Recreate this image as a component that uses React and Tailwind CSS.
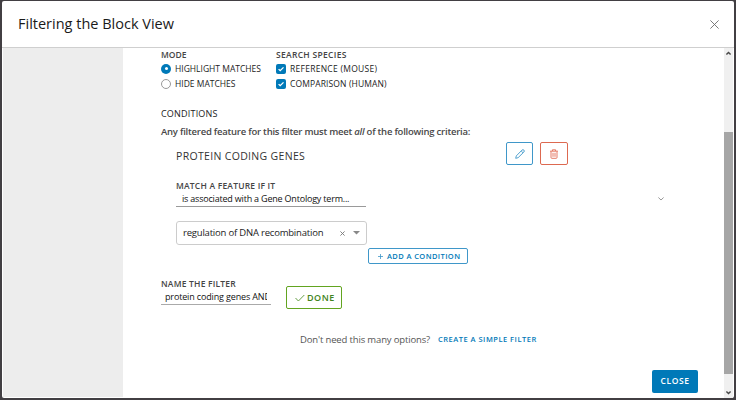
import React from "react";

function Radio({ checked, children, className }) {
  return (
    <label className="flex h-[15px] items-center gap-1">
      <span
        className={
          checked
            ? "flex size-[10px] items-center justify-center rounded-full bg-[#0079b8]"
            : "size-[10px] rounded-full border border-[#9a9a9a] bg-white"
        }
      >
        {checked && <span className="size-[3px] rounded-full bg-white" />}
      </span>
      <span className={`whitespace-nowrap text-[8.5px] font-medium leading-[15px] text-[#222] ${className}`}>{children}</span>
    </label>
  );
}

function Check({ children, className }) {
  return (
    <label className="flex h-[15px] items-center gap-1">
      <span className="flex size-[10px] items-center justify-center rounded-[2px] bg-[#0079b8]">
        <svg width="8" height="8" viewBox="0 0 8 8" fill="none" stroke="white" strokeWidth="1.3">
          <path d="M1.6 4.1 3.2 5.7 6.5 2.4" />
        </svg>
      </span>
      <span className={`whitespace-nowrap text-[8.5px] font-medium leading-[15px] text-[#222] ${className}`}>{children}</span>
    </label>
  );
}

function Header() {
  return (
    <header className="flex h-[47px] shrink-0 items-center justify-between border-b border-[#cfcfcf] pl-4 pr-[15px]">
      <h1 className="whitespace-nowrap text-[14.5px] leading-5 text-[#1a1a1a]">Filtering the Block View</h1>
      <svg className="mt-px" width="9" height="9" viewBox="0 0 9 9" stroke="#6c6c6c" strokeWidth="0.9">
        <path d="M.4.4 8.6 8.6M8.6.4.4 8.6" />
      </svg>
    </header>
  );
}

function Scrollbar() {
  return (
    <div className="flex w-[9px] shrink-0 flex-col bg-[#f0f0f0]">
      <svg width="9" height="11" viewBox="0 0 9 11" fill="none" stroke="#484848" strokeWidth="1.4">
        <path d="M2.4 6.6 4.5 4.4 6.6 6.6" />
      </svg>
      <div className="h-[73px]" />
      <div className="h-[242px] bg-[#a6a6a6]" />
      <div className="grow" />
      <svg width="9" height="11" viewBox="0 0 9 11" fill="none" stroke="#484848" strokeWidth="1.4">
        <path d="M2.4 4.4 4.5 6.6 6.6 4.4" />
      </svg>
    </div>
  );
}

function Condition() {
  return (
    <section className="pl-[15px]">
      <div className="mt-[2px] flex h-[24px] items-start">
        <h2 className="mt-[7px] w-[330px] whitespace-nowrap text-[10.5px] font-medium leading-[15px] tracking-[0.32px] text-[#333]">
          PROTEIN CODING GENES
        </h2>
        <button className="flex h-[23px] w-[27px] items-center justify-center rounded-[2px] border border-[#3f97c9]">
          <svg width="10" height="10" viewBox="0 0 10 10" fill="none" stroke="#3f97c9" strokeWidth="0.9">
            <path d="M.7 9.3 1.3 6.9 7 1.1Q8 .2 8.9 1.1 9.8 2 8.9 3L3.1 8.7ZM6.2 2 8 3.8" />
          </svg>
        </button>
        <button className="ml-[7px] flex h-[23px] w-[28px] items-center justify-center rounded-[2px] border border-[#dd6950]">
          <svg width="10" height="10" viewBox="0 0 10 10" fill="none" stroke="#e26c55" strokeWidth="0.9">
            <path d="M1 2.2H9M3.4 2V.8H6.6V2M2 2.5V8.5Q2 9.3 2.8 9.3H7.2Q8 9.3 8 8.5V2.5M4 3.8V7.8M6 3.8V7.8" />
          </svg>
        </button>
      </div>
      <h3 className="mt-[14px] h-[12px] whitespace-nowrap text-[8.5px] font-semibold leading-[12px] tracking-[0.2px] text-[#454545]">
        MATCH A FEATURE IF IT
      </h3>
      <div className="flex h-[15px] items-start">
        <div className="h-[15px] w-[190px] whitespace-nowrap border-b border-[#9a9a9a] pl-[6px] text-[9px] leading-[14px] tracking-[-0.2px] text-[#111]">
          is associated with a Gene Ontology term...
        </div>
        <svg className="ml-[292px] mt-1" width="6" height="6" viewBox="0 0 6 6" fill="none" stroke="#8c8c8c" strokeWidth="0.9">
          <path d="M.4 1.5 3 4 5.6 1.5" />
        </svg>
      </div>
      <div className="mt-[14px] flex h-[24px] w-[191px] items-center rounded-[3px] border border-[#ccc] pl-[6px] text-[#222]">
        <span className="w-[157px] shrink-0 whitespace-nowrap text-[9.5px] leading-5 tracking-[-0.2px]">regulation of DNA recombination</span>
        <svg className="shrink-0" width="5" height="5" viewBox="0 0 5 5" stroke="#777" strokeWidth="0.9">
          <path d="M.4.4 4.6 4.6M4.6.4.4 4.6" />
        </svg>
        <svg className="ml-[8px] shrink-0" width="7" height="4" viewBox="0 0 7 4" fill="#888">
          <path d="M0 0H7L3.5 3.6Z" />
        </svg>
      </div>
      <button className="ml-[192px] mt-[3px] flex h-[16px] w-[100px] items-center rounded-[2px] border border-[#3f97c9] pl-[9px] text-[#0079b8]">
        <svg width="5" height="5" viewBox="0 0 5 5" stroke="#3f97c9" strokeWidth="0.8">
          <path d="M0 2.5H5M2.5 0V5" />
        </svg>
        <span className="ml-1 whitespace-nowrap text-[7.5px] font-semibold leading-3 tracking-[0.4px]">ADD A CONDITION</span>
      </button>
    </section>
  );
}

export default function App() {
  return (
    <div className="h-[400px] w-[736px] overflow-hidden bg-[#423f43] pl-[2px] pt-px font-['Open_Sans','Inter',sans-serif]">
      <div className="flex h-[397px] w-[732px] flex-col overflow-hidden rounded-[2px] bg-white">
        <Header />
        <div className="flex min-h-0 grow">
          <aside className="mb-px ml-px w-[120px] shrink-0 bg-[#ededed]" />
          <main className="w-[601px] shrink-0 pl-[38px]">
            <div className="flex h-[42px]">
              <div className="w-[115px]">
                <h3 className="h-[13px] pt-px text-[8.5px] font-semibold leading-[12px] text-[#454545]">MODE</h3>
                <Radio checked className="">HIGHLIGHT MATCHES</Radio>
                <Radio className="">HIDE MATCHES</Radio>
              </div>
              <div>
                <h3 className="h-[13px] whitespace-nowrap pt-px text-[8.5px] font-semibold leading-[12px] tracking-[0.3px] text-[#454545]">
                  SEARCH SPECIES
                </h3>
                <Check className="tracking-[0.27px]">REFERENCE (MOUSE)</Check>
                <Check className="tracking-[0.12px]">COMPARISON (HUMAN)</Check>
              </div>
            </div>
            <h3 className="mt-[17px] h-[14px] text-[9px] font-medium leading-[14px] tracking-[0.2px] text-[#222]">CONDITIONS</h3>
            <p className="mt-[3px] h-[16px] whitespace-nowrap text-[9.5px] font-semibold leading-[15px] tracking-[-0.23px] text-[#484848]">
              Any filtered feature for this filter must meet <em>all</em> of the following criteria:
            </p>
            <Condition />
            <div className="mt-[14px] flex h-[31px]">
              <div className="w-[110px]">
                <h3 className="h-[12px] whitespace-nowrap text-[8.5px] font-semibold leading-[12px] tracking-[0.2px] text-[#454545]">
                  NAME THE FILTER
                </h3>
                <div className="h-[15px] w-[110px] border-b border-[#aaa] px-[4px]">
                  <div className="overflow-hidden whitespace-nowrap text-[9px] leading-[14px] tracking-[-0.15px] text-[#111]">
                    protein coding genes AND
                  </div>
                </div>
              </div>
              <button className="ml-[15px] mt-[8px] flex h-[23px] w-[56px] items-center rounded-[2px] border border-[#62a420] pl-[8px]">
                <svg width="10" height="8" viewBox="0 0 10 8" fill="none" stroke="#569432" strokeWidth="0.9">
                  <path d="M.5 4 3.4 7 9.3 1" />
                </svg>
                <span className="ml-[2px] text-[9px] font-semibold leading-4 tracking-[0.5px] text-[#3f8320]">DONE</span>
              </button>
            </div>
            <div className="ml-[139px] mt-[23px] flex h-[16px] items-center whitespace-nowrap">
              <span className="w-[138px] text-[9.5px] tracking-[-0.15px] text-[#555]">Don't need this many options?</span>
              <a className="text-[7.5px] font-semibold tracking-[0.5px] text-[#0079b8]">CREATE A SIMPLE FILTER</a>
            </div>
            <button className="ml-[491px] mt-[22px] flex h-[23px] w-[46px] items-center justify-center rounded-[2px] bg-[#0079b8] text-[8.5px] font-semibold tracking-[0.6px] text-white">
              CLOSE
            </button>
          </main>
          <Scrollbar />
        </div>
      </div>
    </div>
  );
}
